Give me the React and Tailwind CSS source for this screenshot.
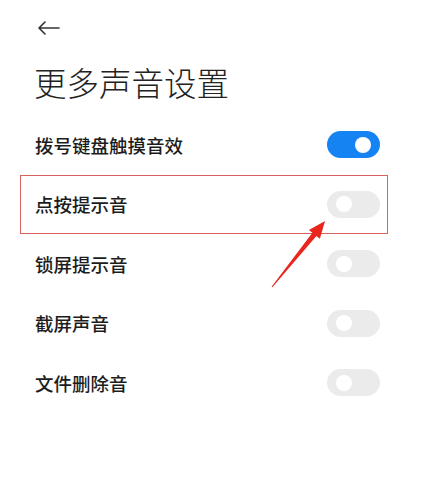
import React from "react";

function Toggle({ on }) {
  return (
    <div
      className={`flex h-[27px] w-[53px] items-center rounded-full px-[9px] ${
        on ? "justify-end bg-[#1683f2]" : "justify-start bg-[#ebebeb]"
      }`}
    >
      <div className="h-[16px] w-[16px] rounded-full bg-white" />
    </div>
  );
}

const rows = [
  { label: "拨号键盘触摸音效", on: true },
  { label: "点按提示音", on: false, hl: true },
  { label: "锁屏提示音", on: false },
  { label: "截屏声音", on: false },
  { label: "文件删除音", on: false },
];

export default function App() {
  return (
    <div
      className="relative h-[490px] w-[445px] overflow-hidden bg-white"
      style={{ fontFamily: '"Noto Sans CJK SC", "Noto Sans", sans-serif' }}
    >
      <div className="pl-[37px] pt-[21px]">
        <svg width="23" height="14" viewBox="0 0 23 14" fill="none">
          <path d="M22 7H2M8 1L2 7l6 6" stroke="#333" strokeWidth="1.6" strokeLinecap="round" strokeLinejoin="round" />
        </svg>
      </div>
      <div className="pl-[34px] pt-[30px] text-[32.5px] font-light leading-[34px] text-[#222]">
        更多声音设置
      </div>
      <div className="ml-[20px] flex w-[368px] flex-col pt-[16px]">
        {rows.map((r) => (
          <div
            key={r.label}
            className={`flex h-[59.5px] items-center justify-between pl-[14px] pr-[7px] border-[1.5px] ${
              r.hl ? "border-[#d8625d]" : "border-transparent"
            }`}
          >
            <span className="text-[18.5px] font-medium leading-none text-[#1c1c1c]">{r.label}</span>
            <Toggle on={r.on} />
          </div>
        ))}
      </div>
      <svg className="absolute left-0 top-0" width="445" height="490" viewBox="0 0 445 490">
        <polygon
          points="271.6,286.7 312.4,232.7 308.9,229.9 325,221 319.9,238.7 316.4,235.9 272.4,287.3"
          fill="#e8261c"
        />
      </svg>
    </div>
  );
}
